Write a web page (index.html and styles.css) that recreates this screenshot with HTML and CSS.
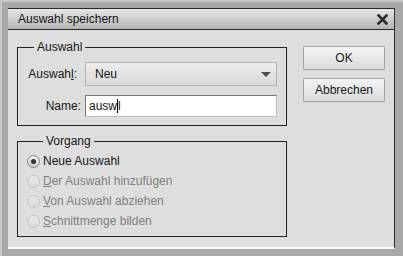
FILE: index.html
```html
<!DOCTYPE html>
<html lang="de">
<head>
    <meta charset="UTF-8">
    <title>Auswahl speichern</title>
    <link rel="stylesheet" href="styles.css">
</head>
<body>
    <div class="frame">
        <div class="window">
            <div class="titlebar">
                <span>Auswahl speichern</span>
                <svg class="close" width="11" height="11" viewBox="0 0 11 11">
                    <path d="M1.5 1.5 L9.5 9.5 M9.5 1.5 L1.5 9.5" stroke="#2b2b2b" stroke-width="2.6" stroke-linecap="square"/>
                </svg>
            </div>
            <div class="content">
                <div class="left">
                    <fieldset class="group">
                        <legend>Auswahl</legend>
                        <div class="fields">
                            <label class="lbl lbl-sel">Auswah<u>l</u>:</label>
                            <div class="select">
                                <span>Neu</span>
                                <span class="arrow"></span>
                            </div>
                            <label class="lbl">Name:</label>
                            <div class="input">ausw<span class="caret"></span>l</div>
                        </div>
                    </fieldset>
                    <fieldset class="group group-op">
                        <legend>Vorgang</legend>
                        <div class="radio checked"><span class="dot"></span><span>Neue Auswahl</span></div>
                        <div class="radio disabled"><span class="dot"></span><span><u>D</u>er Auswahl hinzufügen</span></div>
                        <div class="radio disabled"><span class="dot"></span><span><u>V</u>on Auswahl abziehen</span></div>
                        <div class="radio disabled"><span class="dot"></span><span><u>S</u>chnittmenge bilden</span></div>
                    </fieldset>
                </div>
                <div class="buttons">
                    <button class="btn">OK</button>
                    <button class="btn">Abbrechen</button>
                </div>
            </div>
        </div>
    </div>
</body>
</html>
```

FILE: styles.css
```css
body {
    margin: 0;
    font: 12px "Liberation Sans", Arial, sans-serif;
    color: #161616;
}

/* grey outer frame around the dialog */
.frame {
    width: 403px;
    height: 256px;
    box-sizing: border-box;
    padding: 6px 8px 7px 6px;
    display: flex;
    border-left: 2px solid #c6c6c6;
    border-top: 2px solid #c6c6c6;
    background: #a8a8a8;
}

.window {
    flex: 1;
    display: flex;
    flex-direction: column;
    background: #dedede;
    border-right: 1px solid #2e2e2e;
    border-bottom: 2px solid #ffffff;
}

.titlebar {
    height: 20px;
    border-top: 1px solid #2c2520;
    border-bottom: 1px solid #2c2520;
    background: linear-gradient(#e6e6e6, #b4b4b4);
    display: flex;
    align-items: center;
    justify-content: space-between;
    padding: 0 6px 0 10px;
}

.content {
    flex: 1;
    display: flex;
    padding: 10px 0 0 9px;
}

.left {
    width: 270px;
    display: flex;
    flex-direction: column;
    gap: 8px;
}

.group {
    margin: 0;
    padding: 8px 9px 8px 0;
    border: 1px solid #222222;
    min-width: 0;
}
.group legend {
    margin-left: 16px;
    padding: 0 3px;
    line-height: 14px;
}

.fields {
    display: grid;
    grid-template-columns: 63px 192px;
    column-gap: 4px;
    row-gap: 9px;
    align-items: center;
}
.lbl {
    justify-self: end;
}
.lbl-sel {
    margin-right: 4px;
}

.select {
    height: 22px;
    border: 1px solid #b2b2b2;
    background: linear-gradient(#ededed, #d9d9d9);
    display: flex;
    align-items: center;
    justify-content: space-between;
    padding: 0 5px 0 9px;
}
.arrow {
    width: 0;
    height: 0;
    border-left: 5px solid transparent;
    border-right: 5px solid transparent;
    border-top: 5px solid #4a4a4a;
}

.input {
    height: 20px;
    line-height: 20px;
    border: 1px solid #7a7a7a;
    border-right-color: #bcbcbc;
    border-bottom-color: #bcbcbc;
    background: #ffffff;
    padding-left: 3px;
}
.caret {
    display: inline-block;
    width: 1px;
    height: 14px;
    background: #000000;
    vertical-align: -3px;
}

.group-op {
    padding: 3px 0 5px 9px;
}
.radio {
    height: 20px;
    display: flex;
    align-items: center;
    gap: 3px;
}
.dot {
    width: 11px;
    height: 11px;
    border-radius: 50%;
    border: 1px solid #c2c2c2;
    background: linear-gradient(#e8e8e8, #dadada);
    display: flex;
    align-items: center;
    justify-content: center;
}
.checked .dot {
    border-color: #858585;
    background: linear-gradient(#f2f2f2, #cacaca);
}
.checked .dot::after {
    content: "";
    width: 5px;
    height: 5px;
    border-radius: 50%;
    background: #333333;
}
.disabled {
    color: #7e7e7e;
}

.buttons {
    display: flex;
    flex-direction: column;
    gap: 8px;
    margin: 6px 0 0 16px;
}
.btn {
    width: 82px;
    height: 24px;
    border: 1px solid #a4a4a4;
    border-radius: 1px;
    background: linear-gradient(#f5f5f5, #dadada);
    font: 12px "Liberation Sans", Arial, sans-serif;
    color: #161616;
    padding: 0;
}
```
